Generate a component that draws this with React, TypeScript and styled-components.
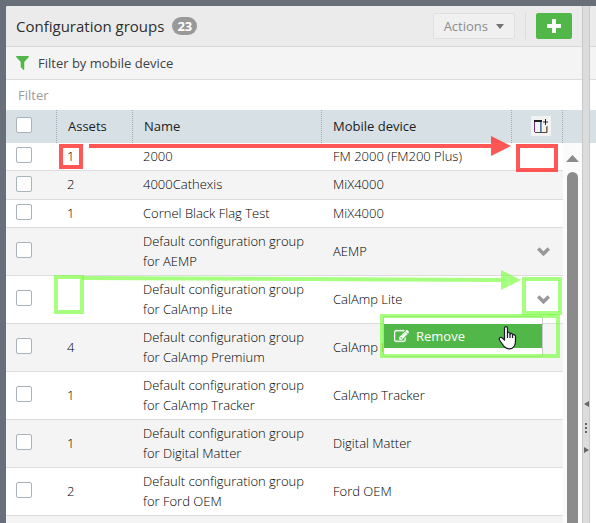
import React from 'react';
import styled, { createGlobalStyle, css } from 'styled-components';

const GREEN = '#50b748';
const RED_MARK = 'rgba(255, 56, 56, 0.85)';
const GREEN_MARK = 'rgba(120, 255, 60, 0.66)';

const GlobalStyle = createGlobalStyle`
  *, *::before, *::after { box-sizing: border-box; }
  body {
    margin: 0;
    background: #696f79;
    color: #3f4347;
    font: 13px/20px 'Open Sans', 'Noto Sans', sans-serif;
    overflow: hidden;
  }
  button, input { font: inherit; color: inherit; margin: 0; }
  button { border: 0; padding: 0; background: none; cursor: pointer; }
  svg { display: block; flex: none; }
`;

const Page = styled.div`
  display: flex;
  height: 100vh;
  padding: 6px 0 0 6px;
`;

const Panel = styled.main`
  flex: 1;
  min-width: 0;
  display: flex;
  flex-direction: column;
  overflow: hidden;
  background: #fff;
  border-top-left-radius: 2px;
`;

const TitleBar = styled.header`
  flex: none;
  display: flex;
  align-items: center;
  height: 41px;
  padding: 0 10px;
  background: #ebebeb;
  border-bottom: 1px solid #d9d9d9;
`;

const Title = styled.h1`
  margin: 0;
  font-size: 15px;
  font-weight: 500;
  color: #2e2e2e;
`;

const Badge = styled.span`
  margin: 0 auto 0 8px;
  height: 18px;
  padding: 0 5px;
  border-radius: 9px;
  background: #999;
  color: #fff;
  font-weight: 700;
  line-height: 18px;
`;

const ActionsButton = styled.button`
  display: flex;
  align-items: center;
  gap: 8px;
  height: 26px;
  padding: 0 10px;
  border: 1px solid #dfdfdf;
  border-radius: 2px;
  background: #f0f0f0;
  color: #8c8c8c;
`;

const Divider = styled.span`
  width: 1px;
  height: 26px;
  margin: 0 10px;
  background: #dcdcdc;
`;

const AddButton = styled.button`
  display: grid;
  place-items: center;
  width: 36px;
  height: 26px;
  border-radius: 2px;
  background: ${GREEN};
`;

const FilterToggle = styled.button`
  flex: none;
  display: flex;
  align-items: center;
  gap: 9px;
  height: 33px;
  padding: 0 10px;
  background: #f4f4f4;
  border-bottom: 1px solid #dcdcdc;
  text-align: left;
`;

const FilterInput = styled.input`
  flex: none;
  width: 100%;
  height: 30px;
  padding: 0 12px;
  border: 0;
  outline: 0;
  background: #fff;
  &::placeholder { color: #9b9b9b; opacity: 1; }
`;

const ListArea = styled.div`
  flex: 1;
  min-height: 0;
  display: flex;
  overflow: hidden;
`;

const TableWrap = styled.div`
  flex: 1;
  min-width: 0;
`;

const Table = styled.table`
  width: 100%;
  table-layout: fixed;
  border-collapse: separate;
  border-spacing: 0;
`;

const Col = styled.col<{ $width?: number }>`
  ${p => p.$width && css`width: ${p.$width}px;`}
`;

const HeadCell = styled.th<{ $edge?: boolean }>`
  height: 33px;
  padding: 0 0 2px 11px;
  background: #d7e0e5;
  border-left: ${p => (p.$edge ? '0' : '1px dotted #a3abaf')};
  color: #1c2225;
  font-weight: 500;
  text-align: left;
  &:first-child { padding: 0 0 3px 10px; }
  &:last-child { border-right: 1px dotted #a3abaf; padding: 0 0 1px 19px; }
`;

const Row = styled.tr`
  position: relative;
  background: #fff;
  &:nth-child(even) { background: #f4f4f4; }
`;

const Cell = styled.td<{ $tall?: boolean }>`
  position: relative;
  padding: 3px 8px ${p => (p.$tall ? 5 : 4)}px 11px;
  border-bottom: 1px solid #dcdcdc;
  vertical-align: middle;
  color: #000;
  font-weight: 300;
  &:first-child { padding: 0 0 3px 10px; }
  &:nth-child(4) { padding-left: 12px; }
  &:last-child { padding: 0 0 0 26px; }
`;

const Check = styled.input.attrs({ type: 'checkbox' })`
  appearance: none;
  display: block;
  width: 16px;
  height: 16px;
  margin: 0;
  border: 1px solid #a9b3ba;
  border-radius: 2px;
  background: #fff;
  &:checked { background: ${GREEN}; }
`;

const ColumnsButton = styled.button`
  display: grid;
  place-items: center;
  width: 20px;
  height: 20px;
  border-radius: 1px;
  background: #f3f3f3;
`;

const IconButton = styled.button`
  display: block;
`;

const Scroller = styled.div`
  flex: none;
  display: flex;
  flex-direction: column;
  align-items: center;
  width: 19px;
  background: #fbfbfb;
  padding-right: 1px;
`;

const ScrollHead = styled.div`
  align-self: stretch;
  height: 33px;
  margin-right: -1px;
  background: #d7e0e5;
`;

const ScrollUp = styled.button`
  height: 29px;
  padding: 12px 0 10px;
`;

const ScrollThumb = styled.div`
  flex: 1;
  width: 11px;
  border-radius: 6px 6px 0 0;
  background: #8b8b8b;
`;

const Splitter = styled.div`
  flex: none;
  width: 8px;
  display: flex;
  flex-direction: column;
  align-items: center;
  padding-top: 394px;
  background: #dcdcdc;
  border: solid #c8c8c8;
  border-width: 0 1px;
`;

const SidePane = styled.aside`
  flex: none;
  width: 6px;
  background: #fff;
`;

const SideBand = styled.div<{ $tone: 'title' | 'filter' | 'blank' | 'head' }>`
  ${p =>
    ({
      title: css`height: 41px; background: #ebebeb; border-bottom: 1px solid #d9d9d9;`,
      filter: css`height: 33px; background: #f4f4f4; border-bottom: 1px solid #dcdcdc;`,
      blank: css`height: 30px;`,
      head: css`height: 33px; background: #d7e0e5;`,
    })[p.$tone]}
`;

/* Row menu, opened from the chevron. */
const Menu = styled.div`
  position: absolute;
  z-index: 2;
  top: 40px;
  right: 20px;
  width: 160px;
  padding: 7px 0 8px;
  border: 1px solid #ccc;
  border-radius: 2px;
  background: #fff;
`;

const MenuItem = styled.button`
  display: flex;
  align-items: center;
  gap: 7px;
  width: 100%;
  height: 24px;
  padding: 0 10px;
  background: ${GREEN};
  color: #fff;
  font-weight: 400;
`;

const Pointer = styled.svg`
  position: absolute;
  top: 8px;
  right: 25px;
`;

/* Callouts laid over the table. */
const marks = {
  redCount: css`top: 1px; left: 3px; width: 24px; height: 25px;`,
  redAction: css`top: 1px; left: 5px; width: 42px; height: 28px;`,
  greenCount: css`top: -1px; left: -2px; width: 30px; height: 39px;`,
  greenAction: css`top: 1px; right: 1px; width: 40px; height: 38px;`,
  greenMenu: css`top: 38px; right: 3px; width: 180px; height: 44px;`,
};

const Mark = styled.span<{ $spot: keyof typeof marks; $color: string }>`
  position: absolute;
  z-index: 3;
  pointer-events: none;
  border: 4px solid ${p => p.$color};
  ${p => marks[p.$spot]}
`;

const Arrow = styled.span<{ $top: number; $left: number; $right: number }>`
  position: absolute;
  z-index: 3;
  pointer-events: none;
  top: ${p => p.$top}px;
  left: ${p => p.$left}px;
  right: ${p => p.$right}px;
  display: flex;
  height: 20px;
`;

const Shaft = styled.svg`
  flex: 1 1 0;
  min-width: 0;
  height: 20px;
`;

function MarkArrow(p: { color: string; drop: number; top: number; left: number; right: number }) {
  const y = 8 - p.drop;
  return (
    <Arrow $top={p.top} $left={p.left} $right={p.right}>
      <Shaft viewBox="0 0 100 20" preserveAspectRatio="none">
        <path d={`M0 ${y}L100 8V12L0 ${y + 4}Z`} fill={p.color} />
      </Shaft>
      <svg width="20" height="20" viewBox="0 0 20 20">
        <path d="M0 0L20 10L0 20Z" fill={p.color} />
      </svg>
    </Arrow>
  );
}

const Caret = () => (
  <svg width="8" height="5" viewBox="0 0 8 5"><path d="M0 0H8L4 5Z" fill="#737373" /></svg>
);

const Plus = () => (
  <svg width="16" height="16" viewBox="0 0 16 16">
    <path d="M6 1.5Q6 1 6.5 1H9.5Q10 1 10 1.5V6H14.5Q15 6 15 6.5V9.5Q15 10 14.5 10H10V14.5Q10 15 9.5 15H6.500Q6 15 6 14.500V10H1.500Q1 10 1 9.500V6.500Q1 6 1.500 6H6Z" fill="#fff" />
  </svg>
);

const Funnel = () => (
  <svg width="13" height="14" viewBox="191 256 1410 1410" preserveAspectRatio="none">
    <path fill={GREEN} d="M1595 295q17 41-14 70l-493 493v742q0 42-39 59-13 5-25 5-27 0-45-19l-256-256q-19-19-19-45v-486l-493-493q-31-29-14-70 17-39 59-39h1280q42 0 59 39z" />
  </svg>
);

const Chevron = () => (
  <svg width="13" height="10" viewBox="0 0 13 10">
    <path fill="#999" d="M2.400.200L6.500 4.300L10.600.200L13 2.700L6.500 9.300L0 2.700Z" />
  </svg>
);

const Edit = () => (
  <svg width="15" height="15" viewBox="0 0 1792 1792">
    <path fill="#fff" stroke="#fff" strokeWidth="40" d="M888 1184l116-116-152-152-116 116v56h96v96h56zm440-720q-16-16-33 1l-350 350q-17 17-1 33t33-1l350-350q17-17 1-33zm80 594v190q0 119-84.5 203.5t-203.5 84.5h-832q-119 0-203.5-84.5t-84.5-203.5v-832q0-119 84.5-203.5t203.5-84.5h832q63 0 117 25 15 7 18 23 3 17-9 29l-49 49q-14 14-32 8-23-6-45-6h-832q-66 0-113 47t-47 113v832q0 66 47 113t113 47h832q66 0 113-47t47-113v-126q0-13 9-22l64-64q15-15 35-7t20 29zm-96-738l288 288-672 672h-288v-288zm444 132l-92 92-288-288 92-92q28-28 68-28t68 28l152 152q28 28 28 68t-28 68z" />
  </svg>
);

const ColumnsIcon = () => (
  <svg width="16" height="16" viewBox="0 0 16 16" fill="none">
    <path d="M1.500 3V14" stroke="#70306e" />
    <path d="M2 14.500H14V8" stroke="#4a4a4a" />
    <path d="M1 3H9" stroke="#222" strokeWidth="2" />
    <path d="M7.500 4V14" stroke="#5b7c9c" />
    <path d="M8.500 4V14" stroke="#d98a2b" />
    <path d="M13.500 9V14" stroke="#8c6a48" />
    <path d="M12.500 1V7M10 4H15" stroke="#222" />
  </svg>
);

const HandPointer = () => (
  <Pointer width="19" height="25" viewBox="0 0 19 25">
    <path
      d="M6.500 15V3.500C6.500 1 9.500 1 9.500 3.500V8.500C9.500 6.700 12 6.900 12 8.700V9.300C12 7.800 14.500 8 14.500 9.700V10.500C14.500 9.200 17.500 9.300 17.500 11.500V16C17.500 19.500 16 23.800 11.500 23.800C7 23.800 5.500 21 1.500 15C.6 12.800 2.600 11.600 4 12.800Z"
      fill="#fff" stroke="#1a1a2a" strokeWidth="1.200" strokeLinejoin="round"
    />
    <path d="M9.500 8V13M12 9V13M14.500 10V13" stroke="#1a1a2a" strokeWidth="1.200" />
  </Pointer>
);

type Group = {
  assets: string;
  name: string;
  device: string;
  tall?: boolean;
  action?: boolean;
  marked?: 'red' | 'green';
};

const groups: Group[] = [
  { assets: '1', name: '2000', device: 'FM 2000 (FM200 Plus)', marked: 'red' },
  { assets: '2', name: '4000Cathexis', device: 'MiX4000', tall: true },
  { assets: '1', name: 'Cornel Black Flag Test', device: 'MiX4000' },
  { assets: '', name: 'Default configuration group for AEMP', device: 'AEMP', action: true },
  { assets: '', name: 'Default configuration group for CalAmp Lite', device: 'CalAmp Lite', action: true, marked: 'green' },
  { assets: '4', name: 'Default configuration group for CalAmp Premium', device: 'CalAmp Premium' },
  { assets: '1', name: 'Default configuration group for CalAmp Tracker', device: 'CalAmp Tracker' },
  { assets: '1', name: 'Default configuration group for Digital Matter', device: 'Digital Matter' },
  { assets: '2', name: 'Default configuration group for Ford OEM', device: 'Ford OEM' },
  { assets: '', name: '', device: '' },
];

function GroupRow({ group }: { group: Group }) {
  const { marked, tall } = group;
  return (
    <Row>
      <Cell>
        {group.name && <Check aria-label={`Select ${group.name}`} />}
      </Cell>
      <Cell $tall={tall}>
        {group.assets}
        {marked === 'red' && <Mark $spot="redCount" $color={RED_MARK} />}
        {marked === 'green' && <Mark $spot="greenCount" $color={GREEN_MARK} />}
      </Cell>
      <Cell $tall={tall}>{group.name}</Cell>
      <Cell $tall={tall}>{group.device}</Cell>
      <Cell>
        {group.action && (
          <IconButton aria-label={`Actions for ${group.name}`}><Chevron /></IconButton>
        )}
        {marked === 'red' && <Mark $spot="redAction" $color={RED_MARK} />}
        {marked === 'green' && (
          <>
            <Menu>
              <MenuItem><Edit />Remove</MenuItem>
              <HandPointer />
            </Menu>
            <Mark $spot="greenAction" $color={GREEN_MARK} />
            <Mark $spot="greenMenu" $color={GREEN_MARK} />
          </>
        )}
        {marked && <RowArrow kind={marked} />}
      </Cell>
    </Row>
  );
}

/* Starts at the asset count and points at the action cell. */
function RowArrow({ kind }: { kind: 'red' | 'green' }) {
  return kind === 'red'
    ? <MarkArrow color={RED_MARK} drop={0} top={-7} left={-422} right={52} />
    : <MarkArrow color={GREEN_MARK} drop={2} top={-6} left={-429} right={42} />;
}

export default function App() {
  return (
    <>
      <GlobalStyle />
      <Page>
        <Panel>
          <TitleBar>
            <Title>Configuration groups</Title>
            <Badge>23</Badge>
            <ActionsButton>Actions<Caret /></ActionsButton>
            <Divider />
            <AddButton aria-label="Add configuration group"><Plus /></AddButton>
          </TitleBar>
          <FilterToggle><Funnel />Filter by mobile device</FilterToggle>
          <FilterInput placeholder="Filter" aria-label="Filter" />
          <ListArea>
            <TableWrap>
              <Table>
                <colgroup>
                  <Col $width={50} />
                  <Col $width={76} />
                  <Col $width={189} />
                  <Col />
                  <Col $width={52} />
                </colgroup>
                <thead>
                  <tr>
                    <HeadCell $edge><Check aria-label="Select all" /></HeadCell>
                    <HeadCell>Assets</HeadCell>
                    <HeadCell>Name</HeadCell>
                    <HeadCell>Mobile device</HeadCell>
                    <HeadCell>
                      <ColumnsButton aria-label="Choose columns"><ColumnsIcon /></ColumnsButton>
                    </HeadCell>
                  </tr>
                </thead>
                <tbody>
                  {groups.map((g, i) => <GroupRow key={i} group={g} />)}
                </tbody>
              </Table>
            </TableWrap>
            <Scroller>
              <ScrollHead />
              <ScrollUp aria-label="Scroll up">
                <svg width="13" height="7" viewBox="0 0 13 7"><path d="M0 7L6.500 0L13 7Z" fill="#8b8b8b" /></svg>
              </ScrollUp>
              <ScrollThumb />
            </Scroller>
          </ListArea>
        </Panel>
        <Splitter>
          <svg width="6" height="56" viewBox="0 0 6 56" fill="#666">
            <path d="M6 1V7L1 4ZM2 23H4V25H2ZM2 27H4V29H2ZM2 31H4V33H2ZM1 47V53L6 50Z" />
          </svg>
        </Splitter>
        <SidePane>
          <SideBand $tone="title" />
          <SideBand $tone="filter" />
          <SideBand $tone="blank" />
          <SideBand $tone="head" />
        </SidePane>
      </Page>
    </>
  );
}
